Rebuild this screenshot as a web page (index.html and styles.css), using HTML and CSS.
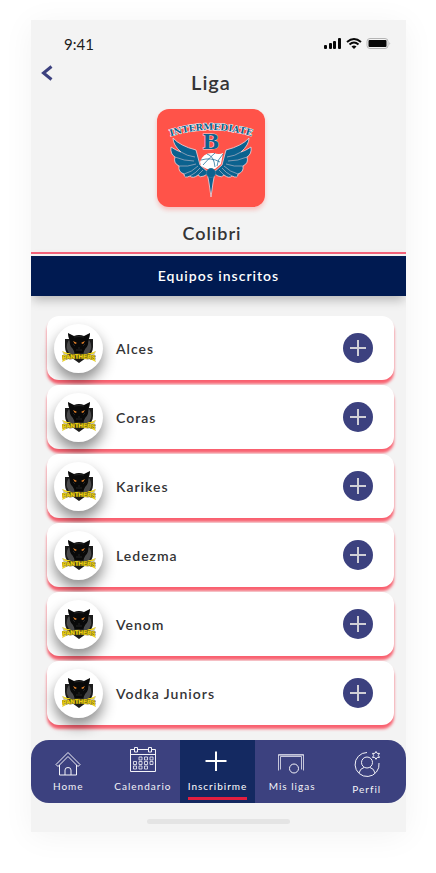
FILE: index.html
```html
<!DOCTYPE html>
<html lang="es">
<head>
<meta charset="utf-8">
<meta name="viewport" content="width=device-width, initial-scale=1">
<title>Liga Colibri</title>
<link rel="stylesheet" href="styles.css">
</head>
<body>
<svg class="sprite" aria-hidden="true">
  <symbol id="panther" viewBox="0 0 34 32">
    <path d="M3 7H7L10 4H24L27 7H31V15Q31 22 24 26L17 31L10 26Q3 22 3 15Z" fill="#1c1c1c"/>
    <path d="M7 8Q4 12 5 17Q7 23 13 26L12 19ZM27 8Q30 12 29 17Q27 23 21 26L22 19Z" fill="#4a4a4b"/>
    <path d="M6 1L12 4Q17 2 22 4L28 1Q28 6 26 8Q27 14 23 17L21 21H13L11 17Q7 14 8 8Q6 6 6 1Z" fill="#090909"/>
    <path d="M12 5Q17 4 22 5M13 14L11 12M21 14L23 12M14 18H20M16 16H18" fill="none" stroke="#383838" stroke-width=".6"/>
    <path d="M11 9L15 11L13 12ZM23 9L19 11L21 12Z" fill="#f58b2c"/>
    <path id="bow" d="M-1 28Q17 25 35 28" fill="none"/>
    <path d="M0 19L5 21L10 22H24L29 21L34 19L32 24L34 30L29 27H5L0 30L2 24Z" fill="#6c6010" opacity=".35"/>
    <text class="panther-word" text-anchor="middle"><textPath href="#bow" startOffset="50%">PANTHERS</textPath></text>
    <path d="M0 19L5 21H9L7 22H3ZM34 19L29 21H25L27 22H31ZM0 30L2 27L4 28ZM34 30L32 27L30 28Z" fill="#f2d718"/>
  </symbol>
  <symbol id="plus" viewBox="0 0 18 18"><path d="M9 1V17M1 9H17" fill="none" stroke="currentColor" stroke-width="2"/></symbol>
</svg>
<div class="phone">
  <div class="status">
    <span>9:41</span>
    <svg width="68" height="14" viewBox="0 0 68 14" aria-hidden="true">
      <g fill="#080808">
        <rect x="0" y="8" width="3" height="4" rx="1"/><rect x="5" y="6" width="3" height="6" rx="1"/><rect x="9" y="4" width="3" height="8" rx="1"/><rect x="14" y="1" width="3" height="11" rx="1"/>
      </g>
      <g fill="none" stroke="#080808" stroke-width="2"><path d="M23 5Q30 -1 37 5"/><path d="M25.500 7.500Q30 3.500 34.500 7.500"/></g>
      <path d="M27.500 9.500Q30 7.500 32.500 9.500L30 12Z" fill="#080808"/>
      <rect x="43" y="1.500" width="21" height="10" rx="3" fill="none" stroke="#b5b5b5"/>
      <rect x="44.500" y="3" width="18" height="7" rx="1" fill="#080808"/>
      <path d="M65.500 5V8Q67 6.500 65.500 5Z" fill="#aaa"/>
    </svg>
  </div>
  <header class="league">
    <div class="title-row">
      <button class="back" type="button" aria-label="Volver">
        <svg width="12" height="16" viewBox="0 0 12 16"><path d="M10.500 1.500L2.500 8L10.500 14.500" fill="none" stroke="#3c417f" stroke-width="3"/></svg>
      </button>
      <h1>Liga</h1>
    </div>
    <div class="crest">
      <svg width="92" height="80" viewBox="-4 0 92 80" role="img" aria-label="Intermediate B">
        <path id="arch" d="M-4 20Q42 4 88 20" fill="none"/>
        <text class="arch-word" text-anchor="middle"><textPath href="#arch" startOffset="50%">INTERMEDIATE</textPath></text>
        <g fill="#0b628f" stroke="#f5d5da" stroke-width=".5" stroke-linejoin="round">
          <g id="wing">
            <path d="M4 20Q11 28 27 32L31 47L40 55L35 58Q31 60 29 57Q24 61 21 58Q15 61 15 56Q9 54 10 48Q4 45 6 39Q1 36 2 29Q8 33 12 34Q4 27 4 20Z" stroke-width=".8"/>
            <path d="M6 39Q15 43 25 43M10 48Q19 49 27 46M15 56Q23 54 29 48M21 58Q27 55 31 50M29 57L34 52M12 34Q18 38 26 39" fill="none"/>
          </g>
          <use href="#wing" transform="matrix(-1 0 0 1 84 0)"/>
        </g>
        <path d="M31 44Q34 34 45 35Q50 37 54 35L52 46L46 51H38L32 48Z" fill="#fff"/>
        <path d="M32 42Q42 39 51 44M38 36Q45 38 46 49M34 47Q41 39 46 35M48 48Q48 42 54 36" fill="none" stroke="#0b628f" stroke-width=".7"/>
        <path d="M38 54L40 65L42 79L44 65L46 54Z" fill="#0b628f" stroke="#f5d5da" stroke-width=".8"/>
        <circle cx="42" cy="55" r="4.500" fill="#0b628f" stroke="#2b7599"/>
        <text class="crest-letter" x="42" y="31" text-anchor="middle">B</text>
      </svg>
    </div>
    <h2>Colibri</h2>
  </header>
  <main>
    <h3 class="banner">Equipos inscritos</h3>
    <ul class="teams">
      <li><span class="avatar"><svg><use href="#panther"/></svg></span><span class="name">Alces</span><button type="button" class="add" aria-label="Inscribirme en Alces"><svg><use href="#plus"/></svg></button></li>
      <li><span class="avatar"><svg><use href="#panther"/></svg></span><span class="name">Coras</span><button type="button" class="add" aria-label="Inscribirme en Coras"><svg><use href="#plus"/></svg></button></li>
      <li><span class="avatar"><svg><use href="#panther"/></svg></span><span class="name">Karikes</span><button type="button" class="add" aria-label="Inscribirme en Karikes"><svg><use href="#plus"/></svg></button></li>
      <li><span class="avatar"><svg><use href="#panther"/></svg></span><span class="name">Ledezma</span><button type="button" class="add" aria-label="Inscribirme en Ledezma"><svg><use href="#plus"/></svg></button></li>
      <li><span class="avatar"><svg><use href="#panther"/></svg></span><span class="name">Venom</span><button type="button" class="add" aria-label="Inscribirme en Venom"><svg><use href="#plus"/></svg></button></li>
      <li><span class="avatar"><svg><use href="#panther"/></svg></span><span class="name">Vodka Juniors</span><button type="button" class="add" aria-label="Inscribirme en Vodka Juniors"><svg><use href="#plus"/></svg></button></li>
    </ul>
  </main>
  <nav class="tabs">
    <a href="#home">
      <svg width="26" height="26" viewBox="0 0 26 26"><path d="M1 13.500L13 1.500L25 13.500L23 15.500L13 5.500L3 15.500ZM4.500 14V24H21.500V14M10 24V19Q10 16.500 13 16.500Q16 16.500 16 19V24"/></svg>
      <span>Home</span>
    </a>
    <a href="#calendario" class="raised">
      <svg width="26" height="26" viewBox="0 0 26 26"><path d="M4.500 2.500H.5V24.500H25.500V2.500H21.500M7.500 2.500H18.500M.5 7.500H25.500M4.500.5H7.500V5H4.500ZM18.500.5H21.500V5H18.500Z"/><path d="M9 10H12V13H9ZM14.500 10H17.500V13H14.500ZM20 10H23V13H20ZM3.500 14.500H6.500V17.500H3.500ZM9 14.500H12V17.500H9ZM14.500 14.500H17.500V17.500H14.500ZM20 14.500H23V17.500H20ZM3.500 19H6.500V22H3.500ZM9 19H12V22H9ZM14.500 19H17.500V22H14.500Z" stroke-opacity=".8"/></svg>
      <span>Calendario</span>
    </a>
    <a href="#inscribirme" class="active" aria-current="page">
      <svg width="26" height="26" viewBox="0 0 26 26"><path d="M12 .5V20M1.500 10H22.500" stroke-width="2"/></svg>
      <span>Inscribirme</span>
    </a>
    <a href="#ligas">
      <svg width="28" height="26" viewBox="0 0 28 26"><path d="M.5 19.500V3.500H25.500V19.500M2.500 18.500V5.500H23.500V18.500" stroke-opacity=".75"/><path d="M.5 4.500H25.500" stroke-opacity=".5"/><circle cx="16" cy="17.500" r="4.500"/></svg>
      <span>Mis ligas</span>
    </a>
    <a href="#perfil" class="lowered">
      <svg width="26" height="26" viewBox="0 0 26 26"><path d="M13 1.500A12 12 0 1 0 25 12"/><circle cx="13" cy="11.500" r="5.500"/><path d="M5 22Q6 17.500 10 16.500M16 16.500Q20 17.500 21 22"/><path d="M22 .5L23.200 2.400H25.500L24.300 4.400L25.500 6.400H23.200L22 8.300L20.800 6.400H18.500L19.700 4.400L18.500 2.400H20.800Z"/></svg>
      <span>Perfil</span>
    </a>
  </nav>
  <div class="indicator"></div>
</div>
</body>
</html>
```

FILE: styles.css
```css
* { box-sizing: border-box; }

body {
  margin: 0;
  padding: 20px 30px 41px 31px;
  background: #fff;
  color: #343436;
  font-family: Lato, "Liberation Sans", sans-serif;
}

h1, h2, h3, ul { margin: 0; padding: 0; }

button {
  padding: 0;
  border: 0;
  background: none;
  cursor: pointer;
}

.sprite { position: absolute; width: 0; height: 0; }

.phone {
  padding-bottom: 8px;
  overflow: hidden;
  background: #f3f3f3;
  box-shadow: 0 4px 30px rgba(0, 0, 0, .05);
}

.status {
  display: flex;
  align-items: center;
  justify-content: space-between;
  height: 44px;
  padding: 4px 14px 0 33px;
  color: #1c1c1c;
  font-size: 15px;
}

.title-row {
  display: grid;
  grid-template-columns: 32px 1fr 47px;
  line-height: 36px;
}

.back { height: 18px; }
.back svg { display: block; margin: auto; }

h1, h2 {
  font-weight: 600;
  letter-spacing: 1px;
  text-align: center;
}

h1 { font-size: 20px; }

.league { padding-bottom: 5px; }

.crest {
  display: grid;
  place-items: center;
  width: 108px;
  height: 98px;
  margin: 9px 0 12px calc(50% - 62px);
  border-radius: 12px;
  background: #ff5349;
  box-shadow: 0 3px 4px rgba(255, 83, 73, .3);
}

.arch-word {
  fill: #0b628f;
  stroke: #fff;
  stroke-width: 1px;
  paint-order: stroke;
  font: 700 9px "DejaVu Serif", serif;
}

.crest-letter {
  fill: #0b628f;
  stroke: #f5d5da;
  stroke-width: 1px;
  paint-order: stroke;
  font: 700 20px "DejaVu Serif", serif;
}

.panther-word {
  fill: #f6dc12;
  stroke: #8d7b10;
  stroke-width: 1px;
  paint-order: stroke;
  font: 700 6px "Liberation Sans", sans-serif;
}

h2 {
  padding-right: 13px;
  font-size: 18px;
  line-height: 28px;
}

.banner {
  border-top: 2px solid #f2637a;
  padding-top: 2px;
  background: #001a51 content-box;
  color: #fff;
  font-size: 14px;
  font-weight: 600;
  line-height: 40px;
  letter-spacing: 1px;
  text-align: center;
  box-shadow: 0 6px 10px -2px rgba(0, 0, 0, .25);
}

.teams {
  display: grid;
  gap: 5px;
  padding: 20px 12px 15px 16px;
  list-style: none;
}

.teams li {
  display: flex;
  align-items: center;
  gap: 13px;
  height: 64px;
  padding: 0 21px 0 7px;
  border-radius: 12px;
  background: #fff;
  box-shadow: 0 4px 3px #f9606f;
}

.avatar {
  display: grid;
  place-items: center;
  width: 49px;
  height: 49px;
  border-radius: 50%;
  background: #fff;
  box-shadow: 0 8px 14px rgba(0, 0, 0, .45);
}

.avatar svg { width: 34px; height: 32px; }

.name {
  flex: 1;
  font-size: 14px;
  font-weight: 600;
  letter-spacing: 1px;
}

.add {
  display: grid;
  place-items: center;
  width: 30px;
  height: 30px;
  border-radius: 50%;
  background: #3c417f;
  color: #d0cfd6;
}

.add svg { width: 18px; height: 18px; }

.tabs {
  display: grid;
  grid-template-columns: repeat(5, 1fr);
  height: 63px;
  padding-right: 2px;
  overflow: hidden;
  border-radius: 18px;
  background: #3c417f;
}

.tabs a {
  display: flex;
  flex-direction: column;
  align-items: center;
  gap: 2px;
  padding-top: 11px;
  color: #f3f3f8;
  font-size: 10px;
  line-height: 14px;
  letter-spacing: 1px;
  text-decoration: none;
}

.tabs svg { fill: none; stroke: currentColor; }

.tabs .raised { padding-top: 7px; gap: 6px; }
.tabs .lowered { gap: 5px; }

.tabs .active { background: #142961; color: #fff; }
.tabs .active span { border-bottom: 3px solid #e31e3f; padding-bottom: 4px; }

.indicator {
  width: 38%;
  height: 5px;
  margin: 16px auto 0;
  border-radius: 3px;
  background: #e4e4e4;
}
```
